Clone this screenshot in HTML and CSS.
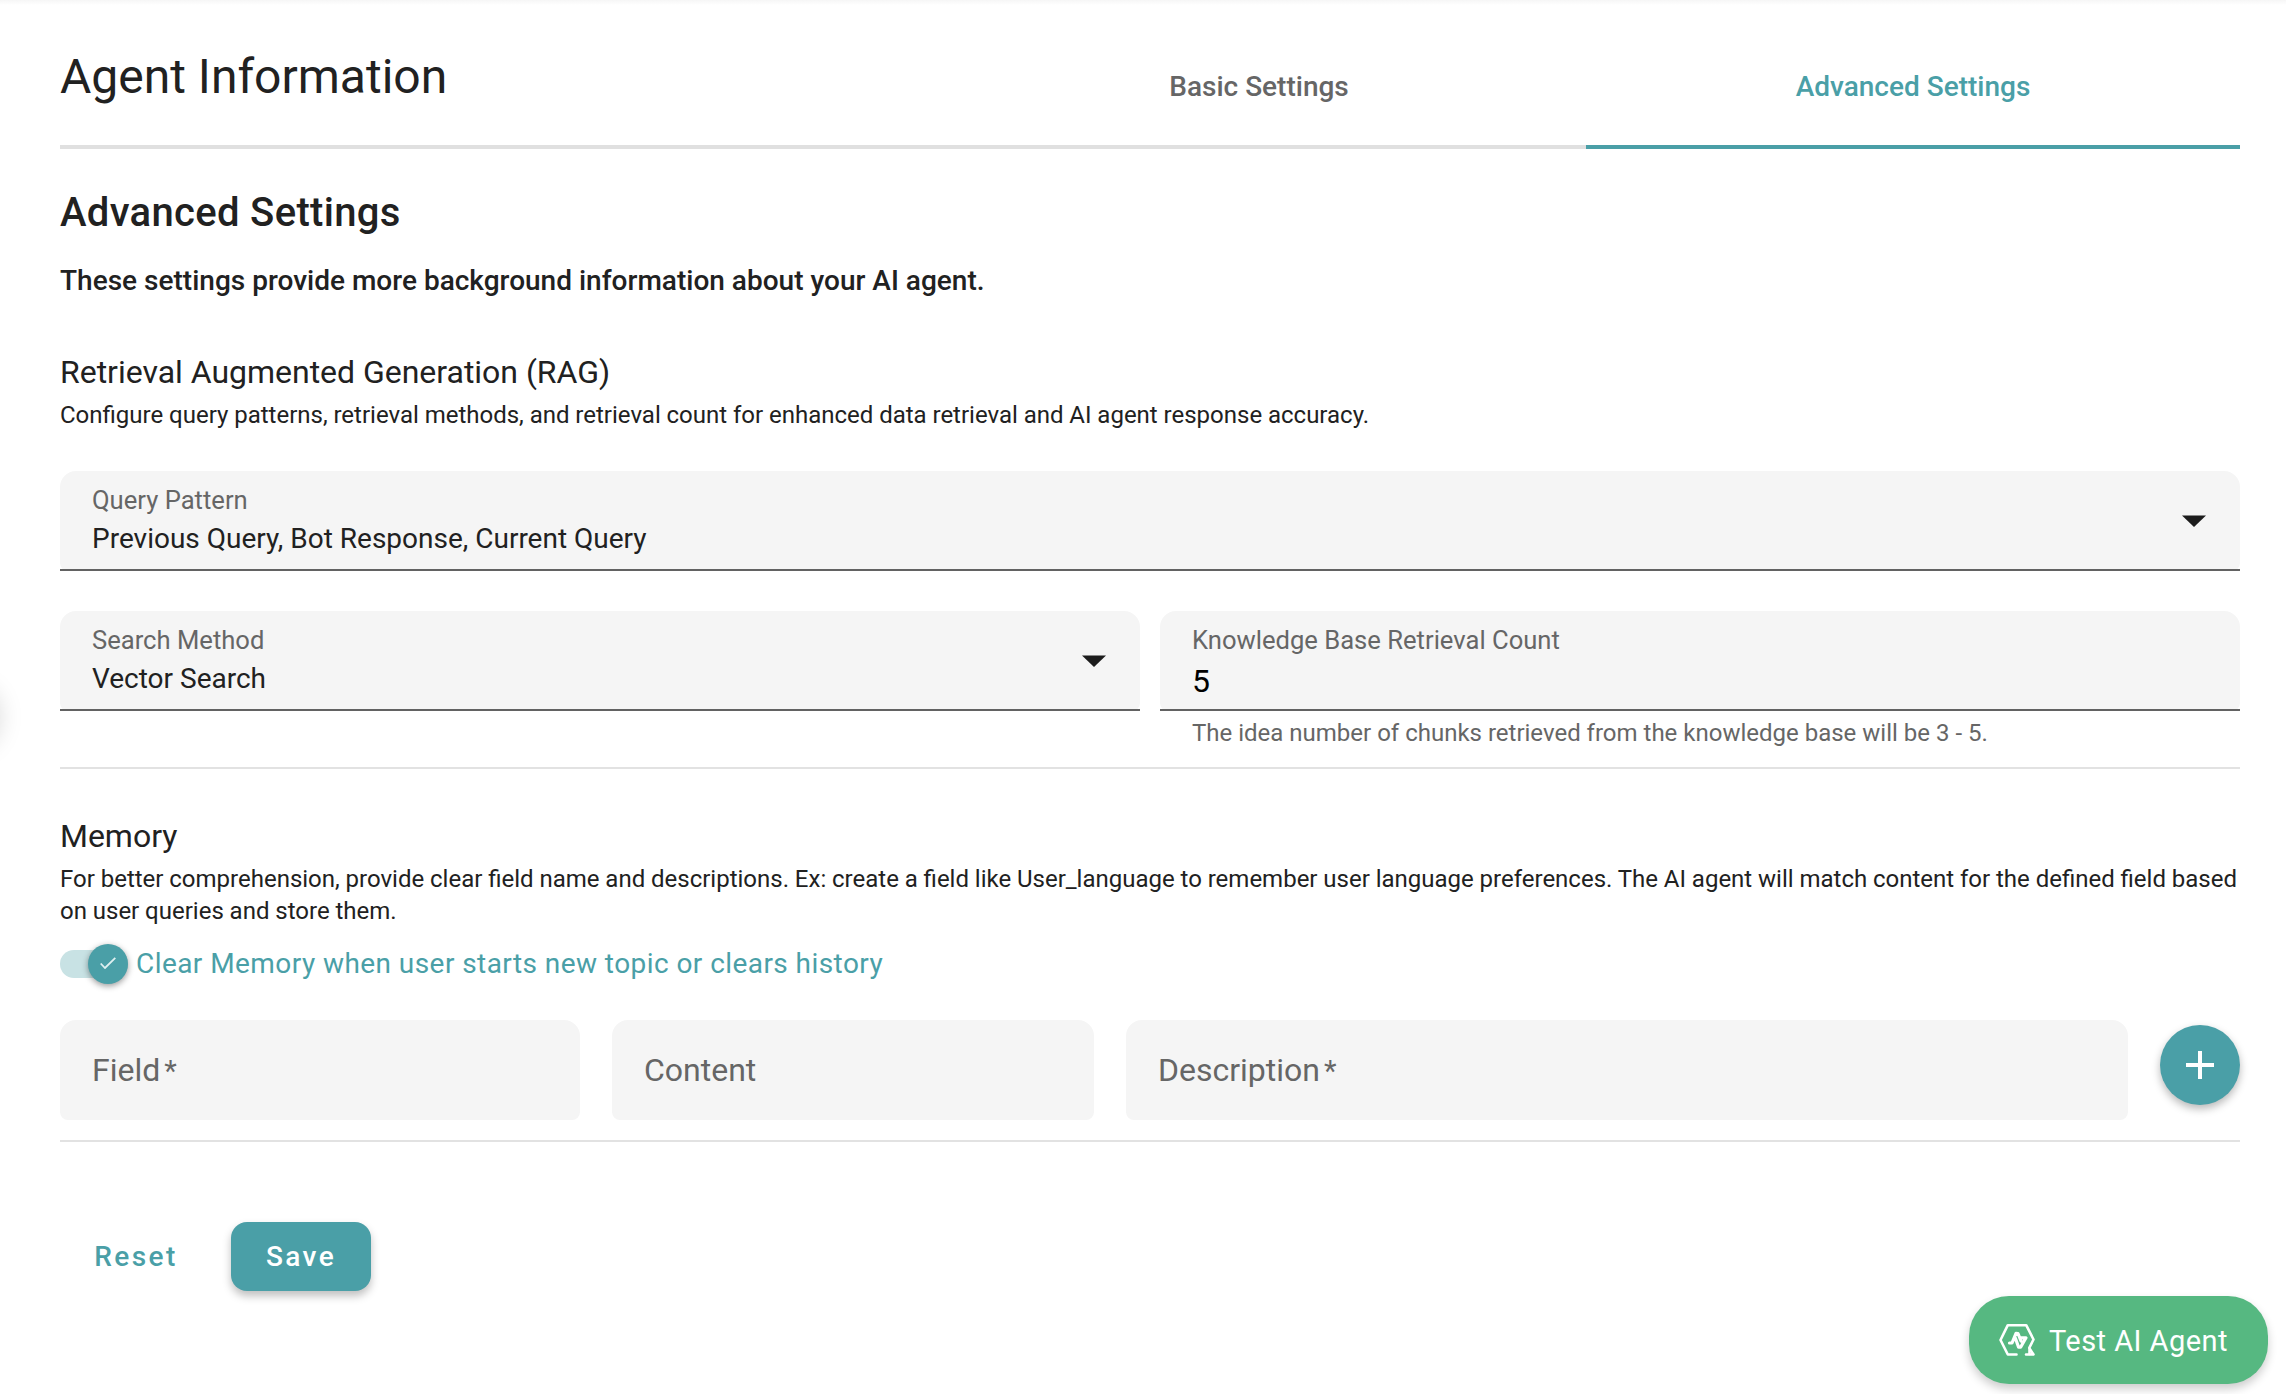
FILE: index.html
```html
<!DOCTYPE html>
<html lang="en">
<head>
<meta charset="utf-8">
<title>Agent Information</title>
<link rel="stylesheet" href="styles.css">
</head>
<body>
<div class="drawer-handle"></div>
<main class="page">
  <header class="header">
    <h1 class="title">Agent Information</h1>
    <nav class="tabs">
      <a class="tab">Basic Settings</a>
      <a class="tab tab-active">Advanced Settings</a>
    </nav>
  </header>

  <h2 class="heading">Advanced Settings</h2>
  <p class="lead">These settings provide more background information about your AI agent.</p>

  <section class="section rag">
    <h3 class="subheading">Retrieval Augmented Generation (RAG)</h3>
    <p class="text">Configure query patterns, retrieval methods, and retrieval count for enhanced data retrieval and AI agent response accuracy.</p>
    <div class="field query">
      <div class="field-body">
        <span class="label">Query Pattern</span>
        <span class="value">Previous Query, Bot Response, Current Query</span>
      </div>
      <svg class="arrow" viewBox="0 0 24 12"><path d="M0 0.4H24L12 12Z"/></svg>
    </div>
    <div class="row">
      <div class="field">
        <div class="field-body">
          <span class="label">Search Method</span>
          <span class="value">Vector Search</span>
        </div>
        <svg class="arrow" viewBox="0 0 24 12"><path d="M0 0.4H24L12 12Z"/></svg>
      </div>
      <div class="field-group">
        <div class="field">
          <div class="field-body">
            <span class="label">Knowledge Base Retrieval Count</span>
            <span class="value value-input">5</span>
          </div>
        </div>
        <p class="hint">The idea number of chunks retrieved from the knowledge base will be 3 - 5.</p>
      </div>
    </div>
  </section>

  <section class="section memory">
    <h3 class="subheading">Memory</h3>
    <p class="text">For better comprehension, provide clear field name and descriptions. Ex: create a field like User_language to remember user language preferences. The AI agent will match content for the defined field based on user queries and store them.</p>
    <div class="toggle">
      <span class="track"><span class="thumb"><svg viewBox="0 0 16 12"><path d="M0.7 6.5L5 11L15.3 0.9"/></svg></span></span>
      <span class="toggle-label">Clear Memory when user starts new topic or clears history</span>
    </div>
    <div class="memory-row">
      <div class="input">Field<span class="star">*</span></div>
      <div class="input">Content</div>
      <div class="input">Description<span class="star">*</span></div>
      <button class="add"><svg viewBox="0 0 28 28"><path d="M12 0h4v12h12v4H16v12h-4V16H0v-4h12z"/></svg></button>
    </div>
  </section>

  <footer class="actions">
    <button class="btn">Reset</button>
    <button class="btn btn-primary">Save</button>
  </footer>
</main>
<button class="test">
  <svg viewBox="0 0 36 34"><path d="M17.5 31.5H8.8L1.5 17L8.8 2.2H27.2L34.5 16.5L30.2 25L34.5 31.5H27"/><path d="M30.5 27V31"/><path class="bolt" d="M10.5 20H13L17 10.3L19 10.5L22 18M16.5 15.5L19.6 24.2H21.6L27 14.8H21"/></svg>
  <span>Test AI Agent</span>
</button>
</body>
</html>
```
FILE: styles.css
```css
* { box-sizing: border-box; }
body {
  margin: 0;
  height: 1394px;
  overflow: hidden;
  background: #fff linear-gradient(#f6f6f6, #fff) 0 0 / 100% 5px no-repeat;
  color: #212121;
  font-family: Roboto, sans-serif;
}
h1, h2, h3, p { margin: 0; font-weight: 400; }
button { border: 0; padding: 0; font-family: inherit; }
.page { padding: 0 46px 0 60px; }
.header {
  display: flex;
  height: 149px;
  border-bottom: 4px solid #e0e0e0;
}
.title { flex: 1; padding-top: 49px; font-size: 48px; line-height: 56px; }
.tabs { display: flex; width: 60%; }
.tab {
  flex: 1;
  height: 149px;
  padding-top: 70px;
  font-size: 28px;
  line-height: 33px;
  font-weight: 500;
  text-align: center;
  color: #666;
}
.tab-active { color: #4a9fa7; border-bottom: 4px solid #4a9fa7; }
.heading { margin-top: 40px; font-size: 40px; line-height: 48px; font-weight: 500; letter-spacing: 0.32px; }
.lead { margin-top: 27px; font-size: 28px; line-height: 33px; font-weight: 500; letter-spacing: 0.01px; }
.section { border-bottom: 2px solid #e2e2e2; }
.rag { height: 421px; margin-top: 51px; }
.memory { height: 373px; padding-top: 43px; }
.subheading { font-size: 32px; line-height: 48px; letter-spacing: -0.02px; }
.text { margin-top: 3px; font-size: 24px; line-height: 32px; word-spacing: -0.12px; }
.field {
  position: relative;
  display: flex;
  justify-content: space-between;
  height: 100px;
  padding: 14px 34px 0 32px;
  border-radius: 16px 16px 8px 8px;
  background: #f5f5f5;
}
.field::after {
  content: "";
  position: absolute;
  left: 0;
  right: 0;
  bottom: 0;
  height: 2px;
  background: #626262;
}
.query { margin-top: 40px; }
.row { display: grid; grid-template-columns: 1fr 1fr; gap: 20px; margin-top: 40px; }
.field-body { display: flex; flex-direction: column; }
.label { font-size: 25.6px; line-height: 30px; color: #666; }
.value { margin-top: 7px; font-size: 28px; line-height: 33px; }
.value-input { font-size: 32px; line-height: 38px; color: #000; }
.arrow { width: 24px; height: 12px; margin-top: 30px; fill: #1c1c1c; }
.hint { padding: 7px 32px 0; font-size: 24px; line-height: 30px; color: #666; }
.toggle { display: flex; align-items: center; height: 40px; margin-top: 17px; }
.track {
  display: flex;
  justify-content: flex-end;
  align-items: center;
  width: 68px;
  height: 28px;
  border-radius: 14px;
  background: #c8e2e4;
}
.thumb {
  display: flex;
  flex: none;
  align-items: center;
  justify-content: center;
  width: 40px;
  height: 40px;
  border-radius: 50%;
  background: #4a9fa7;
  box-shadow: 0 2px 6px rgba(0, 0, 0, 0.4);
}
.thumb svg { width: 16px; height: 12px; margin-top: -2px; fill: none; stroke: #dff0f1; stroke-width: 1.8; }
.toggle-label { margin-left: 8px; font-size: 28px; line-height: 38px; letter-spacing: 0.435px; color: #4a9fa7; }
.memory-row { display: grid; grid-template-columns: 520px 482px 1002px 80px; gap: 32px; margin-top: 36px; }
.input {
  height: 100px;
  padding: 0 32px;
  border-radius: 16px 16px 8px 8px;
  background: #f5f5f5;
  font-size: 32px;
  line-height: 100px;
  color: #666;
}
.star { margin-left: 4px; font-size: 29px; }
.add {
  display: flex;
  align-items: center;
  justify-content: center;
  width: 80px;
  height: 80px;
  margin-top: 5px;
  border-radius: 50%;
  background: #4a9fa7;
  box-shadow: 0 4px 8px rgba(0, 0, 0, 0.28);
}
.add svg { width: 28px; height: 28px; fill: #fff; }
.actions { display: flex; gap: 19px; margin-top: 80px; }
.btn {
  height: 69px;
  width: 152px;
  border-radius: 16px;
  background: transparent;
  color: #4a9fa7;
  font-size: 28px;
  font-weight: 500;
  letter-spacing: 2.4px;
}
.btn-primary { width: 140px; background: #4a9fa7; color: #fff; box-shadow: 0 5px 8px rgba(0, 0, 0, 0.25); }
.test {
  position: absolute;
  left: 1969px;
  top: 1296px;
  display: flex;
  align-items: center;
  width: 299px;
  height: 88px;
  padding-left: 30px;
  border-radius: 40px;
  background: #56b881;
  color: #fff;
  font-size: 29px;
  letter-spacing: 0.45px;
  box-shadow: 0 5px 10px rgba(0, 0, 0, 0.2);
}
.test span { padding-top: 2px; }
.test svg { width: 36px; height: 34px; margin-right: 14px; fill: none; stroke: #fff; stroke-width: 2.6; stroke-linejoin: round; stroke-linecap: round; }
.test .bolt { stroke-width: 3.2; }
.drawer-handle {
  position: absolute;
  left: -66px;
  top: 685px;
  width: 64px;
  height: 64px;
  border-radius: 50%;
  box-shadow: 0 0 26px rgba(0, 0, 0, 0.18);
}
```
